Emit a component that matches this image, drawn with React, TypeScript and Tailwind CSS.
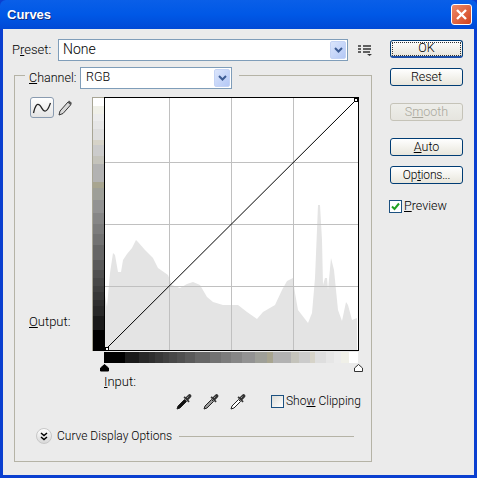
const FONT = "font-['Roboto',sans-serif] font-light";

const ramp: [number, string][] = [
  [21, "#000000"], [14, "#1a1a1a"], [10, "#282828"], [6, "#2f2f2f"], [8, "#383838"], [6, "#404040"],
  [8, "#484848"], [8, "#505050"], [10, "#5a5a5a"], [15, "#666666"], [11, "#727272"], [10, "#7c7c7c"],
  [11, "#868686"], [13, "#929292"], [12, "#9e9f98"], [6, "#a8a590"], [18, "#b2b2b2"], [8, "#c4c3bb"],
  [11, "#cbcbcb"], [5, "#d6d3c8"], [11, "#dedede"], [8, "#e6e6e6"], [7, "#ececec"], [8, "#f0f0e8"], [9, "#ffffff"],
];

// traced off the reference, x/y in plot pixels
const histogram =
  "13,253 13,198 15,210 18,176 21,156 23,158 26,175 29,175 31,163 35,157 40,151 44,143 46,145 53,153 61,161 66,171 76,178 80,188 88,191 95,187 101,185 108,188 115,200 121,205 131,208 146,208 155,215 165,222 171,215 183,208 190,193 195,184 201,181 203,196 206,213 216,226 220,216 223,181 226,108 228,108 230,143 231,188 233,181 235,181 236,193 239,161 242,173 246,213 250,224 254,205 256,208 260,223 265,221 265,253";

function Plot() {
  const rects: { x: number; w: number; c: string }[] = [];
  let x = 0;
  for (const [w, c] of ramp) {
    rects.push({ x, w, c });
    x += w;
  }
  return (
    <svg width="275" height="278" viewBox="0 0 275 278" className="block" shapeRendering="crispEdges">
      {/* left ramp */}
      {rects.map((r) => (
        <rect key={"l" + r.x} x="1" y={254 - r.x - r.w} width="11" height={r.w} fill={r.c} />
      ))}
      <path d="M0.5 254V0.5H12" stroke="#a8a595" fill="none" />
      {/* plot */}
      <rect x="12" y="0" width="255" height="254" fill="#fff" />
      <polygon points={histogram} fill="#e4e4e4" shapeRendering="auto" />
      {[77, 139, 201].map((p) => (
        <line key={p} x1={p + 0.5} x2={p + 0.5} y1="1" y2="253" stroke="#c0c0c0" />
      ))}
      {[65, 127, 189].map((p) => (
        <line key={p} y1={p + 0.5} y2={p + 0.5} x1="13" x2="266" stroke="#c0c0c0" />
      ))}
      <rect x="12.5" y="0.5" width="254" height="253" fill="none" stroke="#000" />
      <line x1="15" y1="251" x2="264" y2="3" stroke="#000" strokeWidth="1" shapeRendering="auto" />
      <rect x="13.5" y="250.5" width="3" height="3" fill="#fff" stroke="#000" />
      <rect x="262.5" y="1.5" width="3" height="3" fill="#fff" stroke="#000" />
      {/* bottom ramp */}
      {rects.map((r) => (
        <rect key={"b" + r.x} x={12 + r.x} y="255" width={r.w} height="11" fill={r.c} />
      ))}
      <path d="M8.500 271v-3l4-3.500 4 3.500v3z" transform="translate(0 3)" fill="#000" stroke="#000" shapeRendering="auto" />
      <path d="M262.500 274.500v-3.500l4-3.500 4 3.500v3.500z" fill="#fff" stroke="#333" shapeRendering="auto" />
    </svg>
  );
}

function Dropper({ fill }: { fill: string }) {
  return (
    <svg width="17" height="17" viewBox="0 0 17 17" className="block">
      <path d="M1 16l1-3 6.500-6.500 2 2L4 15z" fill={fill} stroke="#222" strokeWidth="1" />
      <path d="M7.500 4.500l5 5 1.200-1.200-1.400-1.400 2.600-2.600a1.800 1.800 0 0 0-2.600-2.600L9.700 4.300 8.700 3.300z" fill="#333" />
      <path d="M11 5l1.500-1.500" stroke="#999" strokeWidth="1" />
    </svg>
  );
}

function Btn({ children, disabled, focus }: { children: React.ReactNode; disabled?: boolean; focus?: boolean }) {
  return (
    <div
      className={
        "w-[73px] h-[18px] rounded-[3px] border flex items-center justify-center text-[12.5px] leading-none bg-gradient-to-b " +
        (disabled
          ? "border-[#c5c3b8] from-[#eeeeea] to-[#e6e5df] text-[#a9a79c]"
          : "border-[#003c74] from-white to-[#e8e6dc] text-black") +
        (focus ? " outline-1 -outline-offset-3 outline-dotted outline-[#333] border-b-2 border-b-[#1c4fa8]" : "")
      }
    >
      {children}
    </div>
  );
}

function Select({ value, className }: { value: string; className: string }) {
  return (
    <div className={"h-[22px] border border-[#7f9db9] bg-white flex items-center justify-between pr-[1px] " + className}>
      <span className="text-black leading-none -mt-[2px]">{value}</span>
      <div className="w-[16px] h-[18px] rounded-[2px] bg-gradient-to-br from-[#dbe5fb] to-[#b4c8f6] border border-[#c4d3f5] flex items-center justify-center">
        <svg width="9" height="6" viewBox="0 0 9 6">
          <path d="M1 1l3.500 3.500L8 1" fill="none" stroke="#3d5c94" strokeWidth="2" />
        </svg>
      </div>
    </div>
  );
}

export default function App() {
  return (
    <div className={"w-[477px] h-[478px] flex flex-col overflow-hidden bg-[#0a3fd0] text-black whitespace-nowrap " + FONT}>
      {/* title bar */}
      <div className="h-[29px] shrink-0 flex items-center justify-between pl-[7px] pr-[5px] bg-gradient-to-b from-[#0a5fe8] via-[#0058e6] to-[#0149d6] rounded-t-[6px]">
        <span className="font-['Liberation_Sans',sans-serif] font-bold text-[13px] text-white [text-shadow:1px_1px_0_#0f2f80]">Curves</span>
        <div className="w-[21px] h-[21px] rounded-[3px] border border-white bg-gradient-to-br from-[#ee8a68] to-[#d1401a] flex items-center justify-center">
          <svg width="13" height="13" viewBox="0 0 13 13">
            <path d="M2 2l9 9M11 2l-9 9" stroke="#fff" strokeWidth="2.400" />
          </svg>
        </div>
      </div>

      {/* body */}
      <div className="flex-1 mx-[3px] mb-[3px] bg-[#ebebeb] flex">
        <div className="w-[384px] shrink-0">
          <div className="flex items-center mt-[10px] h-[22px] text-[13px]">
            <span className="ml-[9px] w-[46px]">P<span className="underline">r</span>eset:</span>
            <Select value="None" className="w-[290px] pl-[4px] text-[14px]" />
            <svg width="14" height="12" viewBox="0 0 14 12" className="ml-[10px]">
              <path d="M0 2h3M5 2h8M0 5h3M5 5h8M0 8h3M5 8h7" stroke="#333" strokeWidth="1.400" />
              <path d="M9 10h5l-2.500 2z" fill="#333" />
            </svg>
          </div>

          {/* channel box */}
          <div className="mt-[14px] ml-[11px] w-[358px] h-[387px] border border-[#b5b3a6] flex flex-col">
            <div className="-mt-[9px] ml-[10px] w-[214px] h-[22px] bg-[#ebebeb] flex items-center text-[12.5px]">
              <span className="ml-[4px] w-[51px]"><span className="underline">C</span>hannel:</span>
              <Select value="RGB" className="w-[152px] pl-[5px] text-[12.5px]" />
            </div>

            <div className="flex mt-[8px]">
              <div className="w-[77px] shrink-0 relative">
                <div className="flex items-center ml-[15px] gap-[4px]">
                  <div className="w-[24px] h-[21px] rounded-[3px] border border-[#8a9bb0] bg-gradient-to-b from-white to-[#e4e4e4] flex items-center justify-center">
                    <svg width="20" height="14" viewBox="0 0 20 14">
                      <path d="M1.500 12C3 5 5 2 7.500 4s3 7 6 6 4-6 5-8" fill="none" stroke="#222" strokeWidth="1.300" />
                    </svg>
                  </div>
                  <svg width="15" height="17" viewBox="0 0 15 17">
                    <path d="M1 16l1-4 8-9 3 2.500-8 9z" fill="#d8d8d8" stroke="#333" />
                    <path d="M9.500 3.500l1.500-2 3 2.500-1.500 2z" fill="#555" />
                  </svg>
                </div>
                <div className="absolute left-[14px] top-[217px] text-[13px] leading-[16px]">
                  <span className="underline">O</span>utput:
                </div>
              </div>
              <Plot />
            </div>

            <div className="ml-[89px] -mt-[1px] text-[13px] leading-[16px]"><span className="underline">I</span>nput:</div>

            <div className="flex items-center mt-[1px] h-[20px] text-[12px]">
              <div className="ml-[161px] flex gap-[10px]">
                <Dropper fill="#111" />
                <Dropper fill="#999" />
                <Dropper fill="#fff" />
              </div>
              <div className="ml-[24px] w-[13px] h-[13px] border border-[#1c5180] bg-gradient-to-br from-[#dcdcd7] to-white" />
              <span className="ml-[2px] leading-none">Sho<span className="underline">w</span> Clipping</span>
            </div>

            <div className="flex items-center mt-[17px] ml-[21px] text-[12px]">
              <div className="w-[16px] h-[16px] rounded-full bg-gradient-to-b from-white to-[#d8d8d8] border border-[#c8c8c8] flex items-center justify-center">
                <svg width="8" height="9" viewBox="0 0 8 9">
                  <path d="M1 1l3 2.500L7 1M1 5l3 2.500L7 5" fill="none" stroke="#000" strokeWidth="1.500" />
                </svg>
              </div>
              <span className="ml-[5px] w-[116px] leading-none">Curve Display Options</span>
              <div className="ml-[6px] w-[175px] h-px bg-[#b5b3a6]" />
            </div>
          </div>
        </div>

        {/* buttons */}
        <div className="flex flex-col ml-[3px] pt-[11px]">
          <Btn focus>OK</Btn>
          <div className="mt-[10px]"><Btn>Reset</Btn></div>
          <div className="mt-[17px]"><Btn disabled>S<span className="underline">m</span>ooth</Btn></div>
          <div className="mt-[17px]"><Btn><span className="underline">A</span>uto</Btn></div>
          <div className="mt-[10px]"><Btn><span className="text-[12px] tracking-[-0.2px]">Op<span className="underline">t</span>ions...</span></Btn></div>
          <div className="flex items-center mt-[16px] -ml-[1px] text-[12.5px]">
            <div className="w-[13px] h-[13px] border border-[#1c5180] bg-white flex items-center justify-center">
              <svg width="9" height="9" viewBox="0 0 9 9">
                <path d="M1 4.500l2.500 2.500L8 1.500" fill="none" stroke="#21a121" strokeWidth="2" />
              </svg>
            </div>
            <span className="ml-[2px] leading-none"><span className="underline">P</span>review</span>
          </div>
        </div>
      </div>
    </div>
  );
}
